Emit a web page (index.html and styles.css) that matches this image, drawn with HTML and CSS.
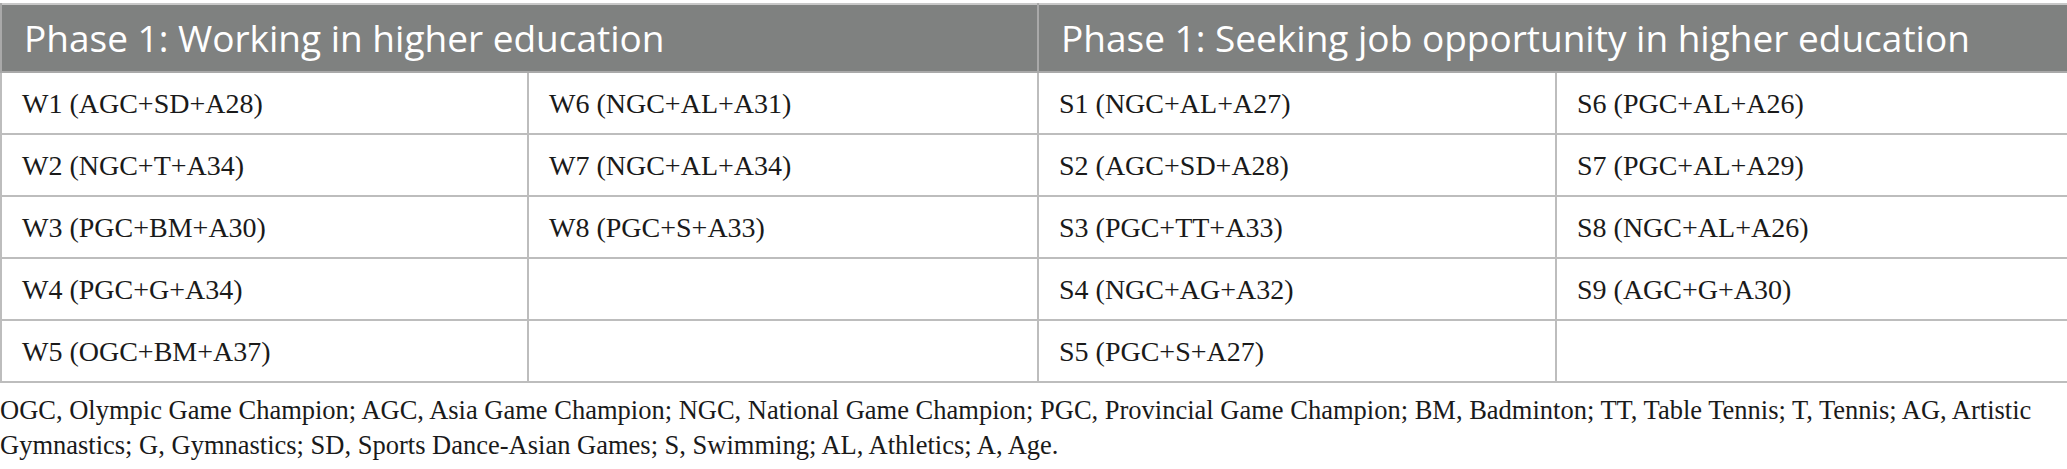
FILE: index.html
```html
<!DOCTYPE html>
<html>
<head>
<meta charset="utf-8">
<link rel="stylesheet" href="styles.css">
</head>
<body>
<div class="page">
<table class="grid">
  <colgroup>
    <col class="c1"><col class="c2"><col class="c3"><col class="c4">
  </colgroup>
  <thead>
    <tr>
      <th colspan="2">Phase 1: Working in higher education</th>
      <th colspan="2">Phase 1: Seeking job opportunity in higher education</th>
    </tr>
  </thead>
  <tbody>
    <tr><td>W1 (AGC+SD+A28)</td><td>W6 (NGC+AL+A31)</td><td>S1 (NGC+AL+A27)</td><td>S6 (PGC+AL+A26)</td></tr>
    <tr><td>W2 (NGC+T+A34)</td><td>W7 (NGC+AL+A34)</td><td>S2 (AGC+SD+A28)</td><td>S7 (PGC+AL+A29)</td></tr>
    <tr><td>W3 (PGC+BM+A30)</td><td>W8 (PGC+S+A33)</td><td>S3 (PGC+TT+A33)</td><td>S8 (NGC+AL+A26)</td></tr>
    <tr><td>W4 (PGC+G+A34)</td><td></td><td>S4 (NGC+AG+A32)</td><td>S9 (AGC+G+A30)</td></tr>
    <tr><td>W5 (OGC+BM+A37)</td><td></td><td>S5 (PGC+S+A27)</td><td></td></tr>
  </tbody>
</table>
<p class="note">OGC, Olympic Game Champion; AGC, Asia Game Champion; NGC, National Game Champion; PGC, Provincial Game Champion; BM, Badminton; TT, Table Tennis; T, Tennis; AG, Artistic Gymnastics; G, Gymnastics; SD, Sports Dance-Asian Games; S, Swimming; AL, Athletics; A, Age.</p>
</div>
</body>
</html>
```
FILE: styles.css
```css
html, body {
  margin: 0;
  padding: 0;
  background: #ffffff;
}
.page {
  width: 2067px;
  padding-top: 3px;
}
.grid {
  width: 2067px;
  border-collapse: collapse;
  table-layout: fixed;
  border-top: 2px solid #c8c8c8;
}
.c1 { width: 527px; }
.c2 { width: 510px; }
.c3 { width: 518px; }
.c4 { width: 512px; }
.grid th {
  background: #7f8180;
  color: #ffffff;
  font-family: "Open Sans", sans-serif;
  font-weight: normal;
  font-size: 37px;
  line-height: 40px;
  text-align: left;
  height: 66px;
  padding: 0 0 0 22px;
  border-left: 2px solid #a9a9a9;
  border-right: 2px solid #a9a9a9;
  border-bottom: 2px solid #a9a9a9;
}
.grid td {
  font-family: "Liberation Serif", serif;
  font-size: 28px;
  color: #1a1a1a;
  height: 58px;
  padding: 2px 0 0 20px;
  border: 2px solid #bdbdbd;
}
.note {
  margin: 10px 0 0 0;
  font-family: "Liberation Serif", serif;
  font-size: 26.5px;
  line-height: 35px;
  color: #1a1a1a;
}
```
